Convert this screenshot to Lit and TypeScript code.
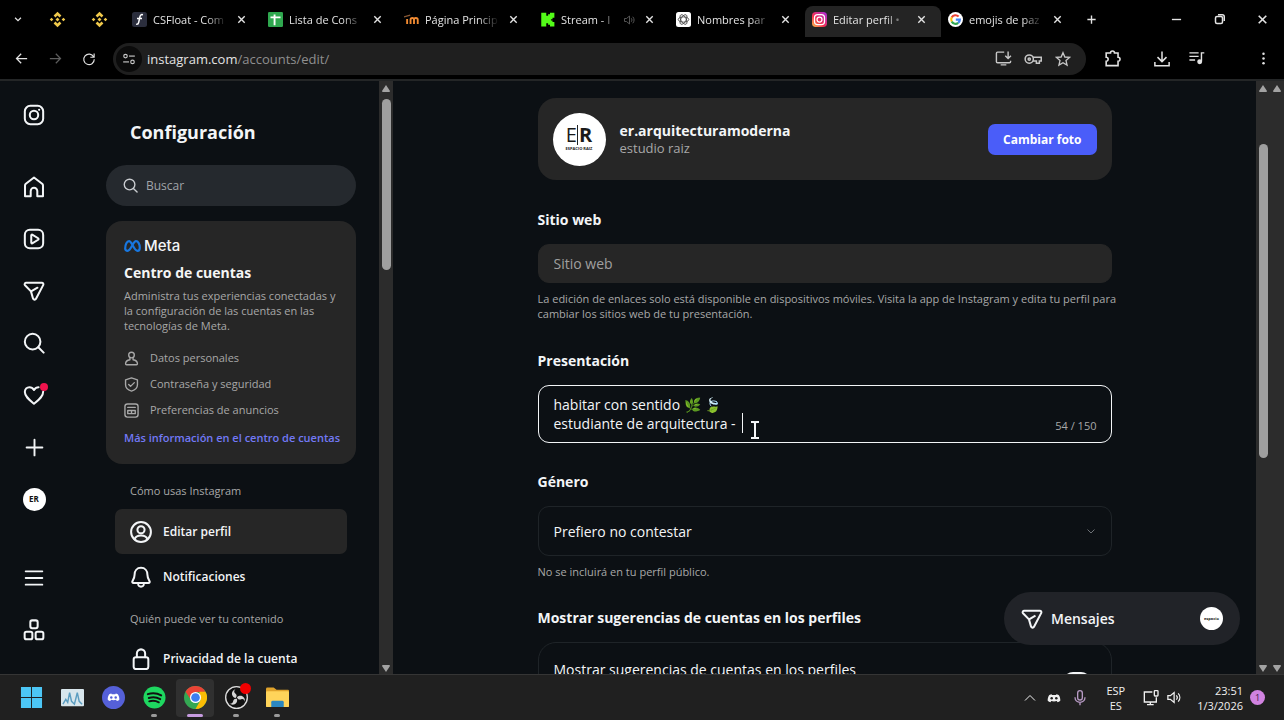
import { LitElement, html, svg, css, nothing } from "lit";
import { customElement } from "lit/decorators.js";
import { classMap } from "lit/directives/class-map.js";

const icon = (size: number, body: unknown, box = "0 0 24 24") =>
  html`<svg class="ico" width=${size} height=${size} viewBox=${box} aria-hidden="true">${body}</svg>`;

const icons = {
  chevron: svg`<path d="M5 9l7 7 7-7"/>`,
  close: svg`<path d="M5 5l14 14M19 5L5 19"/>`,
  plus: svg`<path d="M12 3v18M3 12h18"/>`,
  instagram: svg`<rect x="2" y="2" width="20" height="20" rx="6"/><circle cx="12" cy="12" r="4.6"/><circle cx="17.6" cy="6.4" r="1.2" fill="currentColor" stroke="none"/>`,
  home: svg`<path d="M2.2 22V10.4c0-.8.3-1.4.9-1.9L12 1.6l8.900 6.900c.6.5.9 1.100.9 1.900V22h-6.200v-5.600a3.600 3.600 0 0 0-7.200 0V22z"/>`,
  reels: svg`<rect x="2" y="2" width="20" height="20" rx="5.500"/><path d="M9 8.200v7.600c0 .8.8 1.200 1.500.8l6-3.800c.6-.4.6-1.200 0-1.600l-6-3.800c-.7-.4-1.500 0-1.500.8z"/>`,
  send: svg`<path d="M3.600 3h16.900c1.400 0 2.200 1.400 1.500 2.600l-7.800 14.800c-.8 1.500-2.800 1.300-3.300-.3L8.700 12.400 2.200 5.700C1.200 4.600 2 3 3.600 3z"/><path d="M8.800 12.300L15.800 8.400"/>`,
  search: svg`<circle cx="10.500" cy="10.500" r="8.500"/><path d="M16.700 16.700L22.500 22.500"/>`,
  heart: svg`<path d="M12 21.500C7 17.400 2 13.700 2 8.800 2 5.700 4.300 3.500 7 3.500c2.300 0 3.800 1.100 5 3.100 1.200-2 2.700-3.100 5-3.100M22 8.300c.2 5.200-5 9-10 13.200"/>`,
  menu: svg`<path d="M2 4h20M2 12h20M2 20h20"/>`,
  blocks: svg`<rect x="8" y="1.500" width="8" height="8.500" rx="2"/><rect x="1.800" y="13.800" width="8.400" height="8.400" rx="2"/><rect x="13.800" y="13.800" width="8.400" height="8.400" rx="2"/>`,
  person: svg`<circle cx="12" cy="6.500" r="4.500"/><path d="M9.500 10.500v3.500C5 14.700 2.500 17 2.500 20.500c0 1 .6 1.500 1.500 1.500h16c.9 0 1.500-.5 1.500-1.500 0-3.500-2.500-5.800-7-6.500v-3.500"/>`,
  shield: svg`<path d="M12 1.500l9.500 3v8c0 5-4 8.500-9.500 10-5.500-1.500-9.500-5-9.500-10v-8z"/><path d="M7.500 12l3 3 6-6"/>`,
  card: svg`<rect x="1.500" y="1.500" width="21" height="21" rx="4"/><path d="M6 7h12M6 12h12v5H6zM12 12v5"/>`,
  account: svg`<circle cx="12" cy="12" r="10.800"/><circle cx="12" cy="9.600" r="3.900"/><path d="M5 20c.8-3 3-4.200 7-4.200s6.200 1.200 7 4.200"/>`,
  bell: svg`<path d="M12 2c-4.500 0-7 3.300-7 7.500 0 3.300-1.300 5.200-2.300 6.900-.6 1.100 0 2.100 1.200 2.100h16.200c1.200 0 1.800-1 1.200-2.100-1-1.700-2.300-3.600-2.300-6.900C19 5.300 16.500 2 12 2z"/><path d="M9 20.500c.5 1.300 1.600 2 3 2s2.500-.7 3-2"/>`,
  lock: svg`<rect x="4" y="10" width="16" height="13" rx="2.500"/><path d="M7.500 10V6a4.500 4.500 0 0 1 9 0v4"/>`,
  back: svg`<path d="M21 12H4M11.500 4.500L4 12l7.500 7.500"/>`,
  forward: svg`<path d="M3 12h17M12.500 4.500L20 12l-7.500 7.500"/>`,
  reload: svg`<path d="M20 8.500A9 9 0 1 0 21 12.500M20.800 2.500v6.500h-6.500"/>`,
  tune: svg`<circle cx="6" cy="7" r="3"/><path d="M12 7h10"/><circle cx="18" cy="17" r="3"/><path d="M2 17h10"/>`,
  install: svg`<path d="M13 3H3.500C2.500 3 2 3.500 2 4.500v12c0 1 .5 1.500 1.500 1.500h17c1 0 1.500-.5 1.500-1.500V15M8 21h8M18.500 2v9M14.500 8l4 4 4-4"/>`,
  key: svg`<circle cx="7" cy="12" r="5.500"/><circle cx="7" cy="12" r="1.500"/><path d="M12 9.500h11v5h-2.500v3h-4v-3H12"/>`,
  star: svg`<path d="M12 2.500l2.800 6.500 7 .6-5.300 4.700 1.600 6.900L12 17.500l-6.100 3.700 1.600-6.900L2.200 9.600l7-.6z"/>`,
  puzzle: svg`<path d="M4 5h5.500a2.500 2.500 0 0 1 5 0H19v5.500a2.500 2.500 0 0 1 0 5V21H4v-5.500a2.500 2.500 0 0 0 0-5z"/>`,
  download: svg`<path d="M12 2v13M6 9.500l6 6 6-6M2.500 16v5h19v-5"/>`,
  playlist: svg`<path d="M2 4h13M2 9h13M2 14h8M19 16V4h4"/><circle cx="16.500" cy="16.500" r="2.500" fill="currentColor"/>`,
  dots: svg`<g fill="currentColor" stroke="none"><circle cx="12" cy="4.500" r="2"/><circle cx="12" cy="12" r="2"/><circle cx="12" cy="19.500" r="2"/></g>`,
  minimize: svg`<path d="M2 12h20"/>`,
  restore: svg`<rect x="3" y="7" width="14" height="14" rx="3"/><path d="M8 3.500h8.500a4 4 0 0 1 4 4V16"/>`,
  sound: svg`<path d="M3 9v6h4l6 5V4L7 9zM16.500 8.500c1.800 2 1.800 5 0 7M19.500 5.500c3.500 3.800 3.500 9.200 0 13"/>`,
};

const binance = svg`<g fill="#f0c94b" stroke="none"><path d="M12 1l5.500 5.500-2.600 2.600L12 6.200 9.100 9.100 6.500 6.500z"/><path d="M12 23l5.500-5.500-2.600-2.600L12 17.800l-2.900-2.900-2.600 2.600z"/><path d="M3.600 9.400L6.200 12l-2.600 2.600L1 12zM20.400 9.400L23 12l-2.600 2.600-2.600-2.600zM12 9.200l2.800 2.800-2.800 2.800L9.200 12z"/></g>`;

const favicons: Record<string, unknown> = {
  csfloat: svg`<rect width="24" height="24" rx="4" fill="#2b2e3d" stroke="none"/><path d="M17.500 4.500c-3-1-4.300.6-4.900 3.500l-1.900 8.500c-.5 2.500-1.500 3.500-4 3M8 10.500h8" stroke="#fff" stroke-width="2.400"/>`,
  sheets: svg`<rect width="24" height="24" rx="2" fill="#2fa84f" stroke="none"/><path d="M4 8.500h16M10.500 4v17" stroke="#fff" stroke-width="3"/>`,
  moodle: svg`<path d="M5 19v-8M10.500 19v-6.500c0-4 5.500-4 5.500 0V19m0-6.500c0-4 6-4 6 0V19" stroke="#f08a32" stroke-width="3"/><path d="M0 8l10-3" stroke="#8a5a36" stroke-width="2"/>`,
  kick: svg`<path d="M2 1h8v5h3V3.500h3V1h7v8h-3v2.500h-2.500v2H20V16h3v7h-7v-2.500h-3V18h-3v5H2z" fill="#53fc18" stroke="none"/>`,
  chatgpt: svg`<rect width="24" height="24" rx="4" fill="#fff" stroke="none"/><g stroke="#444" stroke-width="1.300"><ellipse cx="12" cy="12" rx="8.500" ry="4.200"/><ellipse cx="12" cy="12" rx="8.500" ry="4.200" transform="rotate(60 12 12)"/><ellipse cx="12" cy="12" rx="8.500" ry="4.200" transform="rotate(120 12 12)"/></g>`,
  instagram: svg`<defs><linearGradient id="ig" x1="0" y1="1" x2="1" y2="0"><stop offset="0" stop-color="#ffc64a"/><stop offset=".4" stop-color="#f2304f"/><stop offset="1" stop-color="#a72be0"/></linearGradient></defs><rect width="24" height="24" rx="6" fill="url(#ig)" stroke="none"/><g stroke="#fff" stroke-width="2"><rect x="4" y="4" width="16" height="16" rx="5"/><circle cx="12" cy="12" r="4"/></g>`,
  google: svg`<circle cx="12" cy="12" r="12" fill="#fff" stroke="none"/><g stroke-width="3.400"><path d="M17 7.200A7 7 0 0 0 6 8.600" stroke="#ea4335"/><path d="M6 8.600a7 7 0 0 0 0 6.800" stroke="#fbbc05"/><path d="M6 15.400a7 7 0 0 0 10.400 2" stroke="#34a853"/><path d="M16.400 17.400A7 7 0 0 0 19 12.200h-6.500" stroke="#4285f4"/></g>`,
};

const tabs = [
  { title: "CSFloat - Com", fav: "csfloat" },
  { title: "Lista de Cons", fav: "sheets" },
  { title: "Página Princip", fav: "moodle" },
  { title: "Stream - I", fav: "kick", audio: true },
  { title: "Nombres par", fav: "chatgpt" },
  { title: "Editar perfil •", fav: "instagram", active: true },
  { title: "emojis de paz", fav: "google" },
];

@customElement("browser-bar")
export class BrowserBar extends LitElement {
  static styles = css`
    :host { display: block; background: #000; color: #e3e3e3; }
    svg { display: block; fill: none; stroke: currentColor; stroke-width: 2; }
    button, a { all: unset; box-sizing: border-box; display: grid; place-items: center; flex: none; }
    .strip { display: flex; align-items: flex-end; height: 38px; }
    .strip > button { height: 38px; }
    .drop { width: 36px; }
    .drop svg, .tab button svg, .win svg { stroke-width: 3; }
    .pinned { width: 42px; }
    .tabs { display: flex; flex: 0 1 957px; min-width: 0; padding: 0 0 1px 5px; box-sizing: border-box; }
    .tab { display: flex; align-items: center; flex: 1 1 0; min-width: 0; height: 31px; gap: 6px; padding: 0 12px 4px 7px; box-sizing: border-box; }
    .tab.active { background: #242424; border-radius: 8px 8px 0 0; }
    .tab svg { flex: none; }
    .name { flex: 1; min-width: 0; overflow: hidden; white-space: nowrap; font-size: 11px; line-height: 18px; font-weight: 500; mask-image: linear-gradient(90deg, #000 72%, transparent); }
    .tab button { width: 16px; height: 16px; }
    .audio { color: #555; }
    .new { width: 28px; }
    .new svg { stroke-width: 3; }
    .win { display: flex; margin-left: auto; height: 38px; align-items: center; }
    .win button { width: 43px; height: 38px; }
    .bar { display: flex; align-items: center; height: 43px; border-bottom: 2px solid #242627; box-sizing: border-box; }
    .bar > button { width: 34px; height: 34px; }
    .nav { display: flex; padding-left: 4px; }
    .nav button { width: 34px; height: 32px; }
    .dim { color: #5d5d5d; }
    .url { display: flex; align-items: center; flex: 1; min-width: 0; height: 32px; border-radius: 16px; background: #1f1f1f; margin: 0 9px 0 7px; padding: 0 8px 0 3px; }
    .address { flex: 1; padding-left: 5px; font-size: 13px; line-height: 20px; color: #8f8f8f; }
    .address b { font-weight: 400; color: #e3e3e3; }
    .url > button { width: 30px; height: 30px; color: #c7c7c7; }
    .url > .site { width: 26px; height: 26px; border-radius: 13px; background: #0b0b0b; }
    .bar > .gap { margin-left: 16px; }
    .bar > .last { margin: 0 4px 0 33px; }
  `;

  render() {
    return html`
      <div class="strip">
        <button class="drop" aria-label="Buscar pestañas">${icon(10, icons.chevron)}</button>
        <button class="pinned" aria-label="Binance">${icon(17, binance)}</button>
        <button class="pinned" aria-label="Binance">${icon(17, binance)}</button>
        <div class="tabs">
          ${tabs.map(
            (t) => html`<div class=${classMap({ tab: true, active: !!t.active })}>
              ${icon(15, favicons[t.fav])}
              <span class="name">${t.title}</span>
              ${t.audio ? html`<span class="audio">${icon(12, icons.sound)}</span>` : nothing}
              <button aria-label="Cerrar">${icon(11, icons.close)}</button>
            </div>`,
          )}
        </div>
        <button class="new" aria-label="Nueva pestaña">${icon(11, icons.plus)}</button>
        <div class="win">
          <button aria-label="Minimizar">${icon(11, icons.minimize)}</button>
          <button aria-label="Restaurar">${icon(12, icons.restore)}</button>
          <button aria-label="Cerrar ventana">${icon(13, icons.close)}</button>
        </div>
      </div>
      <div class="bar">
        <div class="nav">
          <button aria-label="Atrás">${icon(15, icons.back)}</button>
          <button class="dim" aria-label="Adelante">${icon(15, icons.forward)}</button>
          <button aria-label="Recargar">${icon(14, icons.reload)}</button>
        </div>
        <div class="url">
          <button class="site" aria-label="Información del sitio">${icon(14, icons.tune)}</button>
          <span class="address"><b>instagram.com</b>/accounts/edit/</span>
          <button aria-label="Instalar">${icon(17, icons.install)}</button>
          <button aria-label="Contraseñas">${icon(18, icons.key)}</button>
          <button aria-label="Favoritos">${icon(16, icons.star)}</button>
        </div>
        <button aria-label="Extensiones">${icon(19, icons.puzzle)}</button>
        <button class="gap" aria-label="Descargas">${icon(18, icons.download)}</button>
        <button aria-label="Multimedia">${icon(17, icons.playlist)}</button>
        <button class="last" aria-label="Menú">${icon(15, icons.dots)}</button>
      </div>
    `;
  }
}

@customElement("scroll-track")
export class ScrollTrack extends LitElement {
  static properties = { start: { type: Number }, size: { type: Number } };
  declare start: number;
  declare size: number;
  static styles = css`
    :host { display: flex; flex-direction: column; align-items: center; flex: none; width: 14px; padding: 4px 0 2px; box-sizing: border-box; background: #2c2c2c; }
    svg { flex: none; fill: #a3a3a3; }
    .lane { flex: 1; width: 9px; min-height: 0; }
    .thumb { width: 9px; border-radius: 5px; background: #9f9f9f; }
  `;
  render() {
    return html`
      <svg width="10" height="8" viewBox="0 0 10 8"><path d="M5 0l4 6q0 1-1 1H2q-1 0-1-1z" /></svg>
      <div class="lane">
        ${this.size
          ? html`<div style="height:${this.start}%"></div><div class="thumb" style="height:${this.size}%"></div>`
          : nothing}
      </div>
      <svg width="10" height="8" viewBox="0 0 10 8"><path d="M5 8l4-6q0-1-1-1H2q-1 0-1 1z" /></svg>
    `;
  }
}

@customElement("nav-rail")
export class NavRail extends LitElement {
  static styles = css`
    :host { display: flex; flex-direction: column; flex: none; width: 68px; padding: 8px 0 18px; box-sizing: border-box; color: #f3f5f7; }
    svg { display: block; fill: none; stroke: currentColor; stroke-width: 2.2; stroke-linejoin: round; stroke-linecap: round; }
    a { position: relative; display: grid; place-items: center; height: 52px; color: inherit; text-decoration: none; flex: none; }
    .logo { margin-bottom: 20px; }
    .end { margin-top: auto; }
    .dot { position: absolute; left: 40px; top: 14px; width: 8px; height: 8px; border-radius: 50%; background: #f0134d; }
    .avatar { display: grid; place-items: center; width: 23px; height: 23px; border-radius: 50%; background: #fff; color: #111; font-size: 8px; line-height: 12px; font-weight: 700; }
  `;
  render() {
    const link = (name: keyof typeof icons, label: string, cls = "") =>
      html`<a href="#" class=${cls} aria-label=${label}>${icon(22, icons[name])}</a>`;
    return html`
      ${link("instagram", "Instagram", "logo")} ${link("home", "Inicio")} ${link("reels", "Reels")}
      ${link("send", "Mensajes")} ${link("search", "Buscar")}
      <a href="#" aria-label="Notificaciones">${icon(22, icons.heart)}<span class="dot"></span></a>
      <a href="#" aria-label="Crear">${icon(21, icons.plus)}</a>
      <a href="#" aria-label="Perfil"><span class="avatar">ER</span></a>
      <a href="#" class="end" aria-label="Más">${icon(20, icons.menu)}</a>
      ${link("blocks", "También de Meta")}
    `;
  }
}

@customElement("settings-panel")
export class SettingsPanel extends LitElement {
  static styles = css`
    :host { display: block; flex: none; width: 311px; padding: 38px 23px 0 38px; box-sizing: border-box; overflow: hidden; color: #f3f5f7; }
    svg { display: block; flex: none; fill: none; stroke: currentColor; stroke-width: 2.2; stroke-linejoin: round; stroke-linecap: round; }
    h1 { margin: 0 0 19px 24px; font-size: 18px; line-height: 27px; font-weight: 700; }
    .search { display: flex; align-items: center; gap: 8px; height: 41px; padding: 0 17px; border-radius: 21px; background: #25292e; color: #c9ccd0; }
    input { flex: 1; min-width: 0; border: 0; outline: 0; padding: 0; background: none; color: #f3f5f7; font: inherit; font-size: 12px; line-height: 20px; }
    input::placeholder { color: #a0a4a9; opacity: 1; }
    .card { margin-top: 15px; padding: 15px 18px 18px; border-radius: 16px; background: #262626; color: #a8a8a8; }
    .meta { display: flex; align-items: center; gap: 3px; height: 19px; color: #f3f5f7; font: 500 15px/19px Inter, sans-serif; }
    .meta svg { stroke: #1877e0; }
    h2 { margin: 8px 0 5px; font-size: 14px; line-height: 20px; font-weight: 700; color: #f5f5f5; }
    p { margin: 0 0 12px; font-size: 11px; line-height: 15px; }
    ul { margin: 0; padding: 0; list-style: none; }
    li { display: flex; align-items: center; gap: 11px; height: 26px; font-size: 11px; line-height: 16px; }
    .more { display: block; margin-top: 7px; font-size: 11px; line-height: 16px; font-weight: 600; color: #7279f5; text-decoration: none; white-space: nowrap; }
    h3 { margin: 0 0 0 24px; font-size: 11px; line-height: 18px; font-weight: 500; color: #a8a8a8; }
    .first { margin-top: 18px; margin-bottom: 9px; }
    .second { margin-top: 11px; margin-bottom: 8px; }
    .item { display: flex; align-items: center; gap: 11px; height: 45px; margin: 0 9px; padding: 0 15px; border-radius: 7px; color: inherit; font-size: 12px; line-height: 20px; font-weight: 600; text-decoration: none; }
    .item.on { background: #262626; }
  `;
  render() {
    return html`
      <h1>Configuración</h1>
      <label class="search">${icon(15, icons.search)}<input type="search" placeholder="Buscar" aria-label="Buscar" /></label>
      <section class="card">
        <div class="meta">
          <svg width="17" height="12" viewBox="0 0 17 12"><path d="M1.200 8.500C1.200 4.500 3 1.200 5 1.200c3 0 5 9.600 8.500 9.600 1.500 0 2.300-1.200 2.300-3.100 0-3.500-1.700-6.500-3.800-6.500-3 0-5 9.600-8.300 9.600-1.600 0-2.500-.9-2.500-2.300z" /></svg>
          Meta
        </div>
        <h2>Centro de cuentas</h2>
        <p>Administra tus experiencias conectadas y la configuración de las cuentas en las tecnologías de Meta.</p>
        <ul>
          <li>${icon(15, icons.person)}Datos personales</li>
          <li>${icon(15, icons.shield)}Contraseña y seguridad</li>
          <li>${icon(15, icons.card)}Preferencias de anuncios</li>
        </ul>
        <a class="more" href="#">Más información en el centro de cuentas</a>
      </section>
      <h3 class="first">Cómo usas Instagram</h3>
      <a class="item on" href="#">${icon(22, icons.account)}Editar perfil</a>
      <a class="item" href="#">${icon(22, icons.bell)}Notificaciones</a>
      <h3 class="second">Quién puede ver tu contenido</h3>
      <a class="item" href="#">${icon(22, icons.lock)}Privacidad de la cuenta</a>
    `;
  }
}

@customElement("profile-form")
export class ProfileForm extends LitElement {
  static styles = css`
    :host { display: block; flex: 1; min-width: 0; padding: 17px 24px 0; box-sizing: border-box; overflow: hidden; color: #f3f5f7; }
    form { max-width: 574px; margin: 0 auto; }
    .profile { display: flex; align-items: center; gap: 14px; height: 82px; padding: 0 15px; box-sizing: border-box; border-radius: 18px; background: #262626; }
    .avatar { display: flex; flex-direction: column; align-items: center; justify-content: center; width: 53px; height: 53px; border-radius: 50%; background: #fff; color: #1a1a1a; }
    .mark { display: flex; font-size: 20px; line-height: 20px; }
    .mark b { border-left: 1px solid #222; padding-left: 1px; font-weight: 700; }
    .tag { font-size: 4px; line-height: 8px; font-weight: 700; }
    .who { flex: 1; min-width: 0; }
    .user { font-size: 14px; line-height: 18px; font-weight: 700; }
    .full { font-size: 13px; line-height: 17px; color: #a8a8a8; }
    button { border: 0; padding: 0 15px; height: 31px; border-radius: 7px; background: #4a5df9; color: #fff; font: inherit; font-size: 12px; font-weight: 700; }
    .head { display: block; margin: 0 0 14px; font-size: 14px; line-height: 20px; font-weight: 700; }
    .field { margin-top: 30px; }
    .near { margin-top: 29px; }
    .box { display: block; width: 100%; box-sizing: border-box; border: 1px solid #1f2428; border-radius: 11px; outline: 0; background: none; color: #f3f5f7; font: inherit; font-size: 14px; padding: 0 15px; }
    .text { height: 39px; border-color: #262626; background: #262626; }
    .text::placeholder { color: #a0a0a0; opacity: 1; }
    .wrap { position: relative; }
    .bio { height: 58px; padding: 9px 90px 8px 15px; border: 1px solid #f3f5f7; line-height: 19px; resize: none; overflow: hidden; }
    .count { position: absolute; right: 15px; bottom: 8px; font-size: 11px; line-height: 18px; color: #a8a8a8; }
    .pick { height: 50px; appearance: none; font-weight: 500; }
    .arrow { position: absolute; right: 15px; top: 19px; color: #6d7176; }
    .arrow svg, .ibeam { display: block; fill: none; stroke: currentColor; stroke-width: 2; }
    .caret { position: absolute; left: 204px; top: 28px; width: 1px; height: 20px; background: #f3f5f7; }
    .ibeam { position: absolute; left: 212px; top: 36px; }
    .hint { margin: 8px -12px 0 0; font-size: 11px; line-height: 15px; color: #a8a8a8; }
    .suggest { display: flex; justify-content: space-between; padding: 17px 15px; border: 1px solid #1f2428; border-radius: 18px; height: 80px; font-size: 14px; line-height: 20px; font-weight: 500; }
    .switch { appearance: none; width: 28px; height: 20px; margin: 12px 5px 0 0; border-radius: 10px; background: #f3f5f7; }
  `;
  render() {
    return html`
      <form>
        <div class="profile">
          <div class="avatar">
            <span class="mark">E<b>R</b></span><span class="tag">ESPACIO RAIZ</span>
          </div>
          <div class="who">
            <div class="user">er.arquitecturamoderna</div>
            <div class="full">estudio raiz</div>
          </div>
          <button type="button">Cambiar foto</button>
        </div>
        <div class="field">
          <label class="head" for="web">Sitio web</label>
          <input class="box text" id="web" type="text" placeholder="Sitio web" />
          <p class="hint">
            La edición de enlaces solo está disponible en dispositivos móviles. Visita la app de Instagram y edita tu
            perfil para cambiar los sitios web de tu presentación.
          </p>
        </div>
        <div class="field">
          <label class="head" for="bio">Presentación</label>
          <div class="wrap">
            <textarea class="box bio" id="bio" .value=${"habitar con sentido 🌿 🍃\nestudiante de arquitectura - "}></textarea>
            <span class="caret"></span>
            <svg class="ibeam" width="10" height="18" viewBox="0 0 10 18"><path d="M1 1h3l1 1 1-1h3M5 2v14M1 17h3l1-1 1 1h3" /></svg>
            <span class="count">54 / 150</span>
          </div>
        </div>
        <div class="field near">
          <label class="head" for="gender">Género</label>
          <div class="wrap">
            <select class="box pick" id="gender"><option>Prefiero no contestar</option></select>
            <span class="arrow">${icon(12, icons.chevron)}</span>
          </div>
          <p class="hint">No se incluirá en tu perfil público.</p>
        </div>
        <div class="field near">
          <label class="head" for="suggest">Mostrar sugerencias de cuentas en los perfiles</label>
          <label class="suggest">
            Mostrar sugerencias de cuentas en los perfiles
            <input class="switch" id="suggest" type="checkbox" checked />
          </label>
        </div>
      </form>
    `;
  }
}

const chrome = svg`<g stroke="none"><circle cx="12" cy="12" r="12" fill="#34a853"/><path d="M1.600 6A12 12 0 0 1 22.400 6L12 6.500 7 14z" fill="#ea4335"/><path d="M22.400 6A12 12 0 0 1 12 24l5-9-1-9z" fill="#fbbc05"/><circle cx="12" cy="12" r="5.800" fill="#fff"/><circle cx="12" cy="12" r="4.500" fill="#3d7ff0"/></g>`;
const discordFace = svg`<path d="M8.500 6.500C6.500 7 5.500 7.500 5 8c-1.500 2.500-2.200 5-2 8 1.200 1.200 2.600 1.800 4 2l1-1.700c2.600.9 5.400.9 8 0l1 1.700c1.400-.2 2.800-.8 4-2 .2-3-.5-5.500-2-8-.5-.5-1.500-1-3.500-1.500l-.7 1.200h-5.600z" stroke="none"/>`;

const apps = [
  { name: "Inicio", art: svg`<g stroke="none" fill="#4cc6f5"><path d="M1 1h10.500v10.500H1zM12.500 1H23v10.500H12.500zM1 12.500h10.500V23H1zM12.500 12.500H23V23H12.500z"/></g>` },
  { name: "Monitor", art: svg`<rect x="0" y="3" width="24" height="18" rx="1" fill="#d8e6ec" stroke="none"/><path d="M2 19l3-5 2 3 2-10 2 9 3 3 3-12 2 9 3 3" stroke="#5b9dc0" stroke-width="1.500"/>` },
  { name: "Discord", art: svg`<circle cx="12" cy="12" r="12" fill="#5560d8" stroke="none"/><g fill="#fff" transform="translate(4 3.500) scale(.67)">${discordFace}</g><g fill="#5560d8" stroke="none"><circle cx="9.700" cy="12" r="1.300"/><circle cx="14.300" cy="12" r="1.300"/></g>` },
  { name: "Spotify", open: true, art: svg`<circle cx="12" cy="12" r="11.500" fill="#1ed760" stroke="none"/><path d="M5 8.500c5-1.600 10-1 14 1.300M6 12.500c4-1.200 8.500-.8 12 1.200M6.500 16c3.500-1 7-.6 10 1" stroke="#111" stroke-width="2" stroke-linecap="round"/>` },
  { name: "Chrome", active: true, art: chrome },
  { name: "OBS", open: true, badge: true, art: svg`<circle cx="12" cy="12" r="11.300" fill="#111" stroke="#ddd" stroke-width="1.400"/><g fill="#d6d6d6" stroke="none"><path d="M11 3c-5 2-5 8 0 9.500 2-2 1-4-.5-5S9.500 4 11 3z"/><path d="M11 3c-5 2-5 8 0 9.500 2-2 1-4-.5-5S9.500 4 11 3z" transform="rotate(120 12 12.500)"/><path d="M11 3c-5 2-5 8 0 9.500 2-2 1-4-.5-5S9.500 4 11 3z" transform="rotate(240 12 12.500)"/></g>` },
  { name: "Explorador", open: true, art: svg`<g stroke="none"><path d="M0 3q0-1.500 1.500-1.500H8L11 4h12q1 0 1 1v4H0z" fill="#e0a32b"/><rect y="5.500" width="24" height="16.500" rx="1" fill="#ffd45a"/><path d="M5.500 22v-5q0-1.500 1.500-1.500h10q1.500 0 1.500 1.500v5z" fill="#2b87c0"/></g>` },
];

@customElement("task-bar")
export class TaskBar extends LitElement {
  static styles = css`
    :host { display: flex; align-items: center; justify-content: space-between; height: 46px; padding: 0 19px 0 12px; box-sizing: border-box; background: #202020; border-top: 1px solid #353535; color: #f0f0f0; }
    svg { display: block; fill: none; stroke: currentColor; stroke-width: 2; }
    .apps, .tray { display: flex; align-items: center; gap: 3px; }
    button { all: unset; position: relative; display: grid; place-items: center; width: 38px; height: 38px; border-radius: 4px; }
    .on { background: #303030; }
    .line { position: absolute; bottom: 0; left: 16px; width: 6px; height: 3px; border-radius: 2px; background: #9a9a9a; }
    .on .line { left: 11px; width: 16px; background: #c79be0; }
    .badge { position: absolute; top: 4px; right: 4px; width: 11px; height: 11px; border-radius: 50%; background: #f00000; }
    .tray { gap: 11px; }
    .text { font-size: 11px; line-height: 15px; text-align: right; }
    .lang { text-align: center; margin: 0 7px; }
    .mic { color: #b79ac4; }
    .count { display: grid; place-items: center; width: 15px; height: 15px; border-radius: 50%; background: #d183e0; color: #402048; font-size: 9px; line-height: 12px; }
    .near { display: flex; gap: 7px; margin-right: 5px; }
    .time { display: flex; align-items: center; gap: 7px; }
  `;
  render() {
    return html`
      <div class="apps">
        ${apps.map(
          (a) => html`<button class=${classMap({ on: !!a.active })} aria-label=${a.name}>
            ${icon(23, a.art)} ${a.badge ? html`<span class="badge"></span>` : nothing}
            ${a.open || a.active ? html`<span class="line"></span>` : nothing}
          </button>`,
        )}
      </div>
      <div class="tray">
        ${icon(12, svg`<path d="M2 17l10-10 10 10"/>`)}
        <svg width="14" height="14" viewBox="2 5 20 14"><g fill="#f0f0f0">${discordFace}</g><g fill="#202020" stroke="none"><circle cx="8.700" cy="12.500" r="1.800" /><circle cx="15.300" cy="12.500" r="1.800" /></g></svg>
        <span class="mic">${icon(16, svg`<rect x="8.500" y="1" width="7" height="14" rx="3.500"/><path d="M4.500 11c0 10 15 10 15 0M12 18.500V23"/>`)}</span>
        <div class="text lang">ESP<br />ES</div>
        <div class="near">
          ${icon(16, svg`<path d="M14 3H2v15h18v-7M6 22h10M11 18v4"/><rect x="17" y="1" width="5.500" height="8" rx="1"/>`)}
          ${icon(15, icons.sound)}
        </div>
        <div class="time">
          <div class="text">23:51<br />1/3/2026</div>
          <span class="count">1</span>
        </div>
      </div>
    `;
  }
}

@customElement("app-root")
export class AppRoot extends LitElement {
  static styles = css`
    :host { display: flex; flex-direction: column; height: 100vh; overflow: hidden; background: #0c1014; font-family: "Open Sans", "Noto Sans", sans-serif; }
    browser-bar, task-bar { flex: none; }
    .page { position: relative; display: flex; flex: 1; min-height: 0; }
    .chat { all: unset; position: absolute; right: 44px; bottom: 29px; display: flex; align-items: center; gap: 8px; width: 236px; height: 53px; padding: 0 17px; box-sizing: border-box; border-radius: 27px; background: #212328; color: #f3f5f7; font-size: 14px; line-height: 22px; font-weight: 600; }
    .chat svg { fill: none; stroke: currentColor; stroke-width: 2.2; stroke-linejoin: round; }
    .face { display: grid; place-items: center; width: 23px; height: 23px; margin-left: auto; border-radius: 50%; background: #fff; color: #222; font-size: 4px; line-height: 8px; font-weight: 700; }
  `;
  render() {
    return html`
      <browser-bar></browser-bar>
      <div class="page">
        <nav-rail></nav-rail>
        <settings-panel></settings-panel>
        <scroll-track .start=${1} .size=${30}></scroll-track>
        <profile-form></profile-form>
        <scroll-track .start=${9} .size=${55}></scroll-track>
        <scroll-track></scroll-track>
        <button class="chat">${icon(22, icons.send)}Mensajes<span class="face">espacio</span></button>
      </div>
      <task-bar></task-bar>
    `;
  }
}
